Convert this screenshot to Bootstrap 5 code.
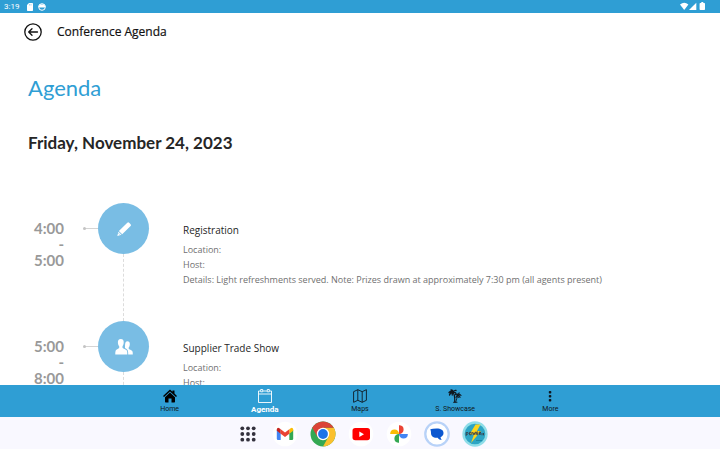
<!DOCTYPE html>
<html lang="en">
<head>
<meta charset="utf-8">
<meta name="viewport" content="width=device-width, initial-scale=1">
<title>Conference Agenda</title>
<link href="https://cdn.jsdelivr.net/npm/bootstrap@5.3.0/dist/css/bootstrap.min.css" rel="stylesheet">
<style>
  :root { --brand: #2f9ed4; --bubble: #79bde4; }
  body { font-family: Lato, sans-serif; color: #262626; background: #fff; }
  svg { display: block; flex: none; }
  .status-bar { background: var(--brand); color: #fff; height: 13px; padding: 0 14px 0 4px; font: 8px/13px Roboto, sans-serif; }
  .app-header { height: 37px; padding: 0 24px; gap: 15px; }
  .app-header h1 { font: 12px/18px "Open Sans", sans-serif; color: #111; -webkit-text-stroke: .2px; }
  .agenda { padding: 24px 28px 0; min-height: 0; }
  .agenda h2 { font-size: 22px; line-height: 28px; color: var(--brand); margin-bottom: 28px; }
  .agenda h3 { font-size: 17px; line-height: 26px; font-weight: 700; margin-bottom: 47px; }
  .session { min-height: 118px; }
  .session-time { width: 36px; padding-top: 17px; font-size: 15px; line-height: 16px; font-weight: 700; color: #999; }
  .connector { width: 15px; height: 5px; margin: 23px 0 0 19px; }
  .rail { width: 51px; }
  .bubble { width: 51px; height: 51px; background: var(--bubble); flex: none; }
  .dots { border-left: 1px dashed #dcdcdc; }
  .session-body { padding: 20px 0 0 34px; font: 9px/15px "Open Sans", sans-serif; color: #707070; }
  .session-body h4 { font-size: 10px; line-height: 15px; font-weight: 400; color: #262626; margin-bottom: 4px; }
  .tab-bar { background: var(--brand); height: 32px; }
  .tabs { max-width: 476px; font: 7px/9px Roboto, sans-serif; }
  .tabs a { color: #101820; padding-top: 4px; gap: 2px; }
  .tabs a.active { color: #fff; font-weight: 700; font-size: 8px; }
  .dock { background: #f9f8ff; height: 32px; padding: 1px 0 0 2px; }
  .dock button { width: 38px; height: 31px; }
  .dock .launcher { padding-left: 2px; }
</style>
<script src="https://cdn.jsdelivr.net/npm/bootstrap@5.3.0/dist/js/bootstrap.bundle.min.js"></script>
</head>
<body class="d-flex flex-column vh-100 overflow-hidden">

<div class="status-bar d-flex align-items-center flex-shrink-0">
  <span>3:19</span>
  <svg class="ms-2" width="6" height="8" viewBox="0 0 6 8"><path d="M2 0h3.3q.7 0 .7.7v6.6q0 .7-.7.7H.7Q0 8 0 7.300V2z" fill="#fff"/><path d="M2.500 1v1.500M4 1v1.500" stroke="#2f9ed4" stroke-width=".4"/></svg>
  <svg class="ms-1" width="10" height="8" viewBox="0 0 10 8"><circle cx="5" cy="4" r="3.300" fill="none" stroke="#fff"/><path d="M1 2.800h8L7.500 4.500h-5z" fill="#fff"/><path d="M2.500 1.500h5v1.500h-5z" fill="#fff"/></svg>
  <svg class="ms-auto" width="26" height="9" viewBox="0 0 26 9"><path d="M0 2.500Q4.200-.8 8.400 2.500L4.200 8z" fill="#fff"/><path d="M16.300.7V8H9z" fill="#fff"/><path d="M21.300 0h2v1h1q.7 0 .7.7v5.600q0 .7-.7.7h-4q-.7 0-.7-.7V1.700q0-.7.7-.7h1z" fill="#fff"/></svg>
</div>

<header class="app-header d-flex align-items-center flex-shrink-0">
  <button type="button" class="btn p-0 border-0" aria-label="Back">
    <svg width="18" height="18" viewBox="0 0 18 18" fill="none" stroke="#111" stroke-width="1.300"><circle cx="9" cy="9" r="8.200"/><path d="M13.500 9H5M8 5.700 4.700 9 8 12.300" stroke-linecap="round" stroke-linejoin="round"/></svg>
  </button>
  <h1 class="m-0">Conference Agenda</h1>
</header>

<main class="agenda flex-grow-1 overflow-hidden">
  <h2 class="fw-normal">Agenda</h2>
  <h3>Friday, November 24, 2023</h3>

  <section class="session d-flex">
    <div class="session-time text-end flex-shrink-0">4:00<br>-<br>5:00</div>
    <svg class="connector" viewBox="0 0 15 5"><path d="M1 2.500h14" stroke="#d4d4d4"/><circle cx="1.500" cy="2.500" r="1.500" fill="#c4c4c4"/></svg>
    <div class="rail d-flex flex-column align-items-center flex-shrink-0">
      <div class="bubble rounded-circle d-flex align-items-center justify-content-center">
        <svg width="16" height="16" viewBox="0 0 16 16" fill="#fff"><path d="M11.300 1.700q.9-.9 1.800 0l1.500 1.500q.9.900 0 1.800L6.200 13.300 2.900 10z"/><path d="M2.400 10.700 5.500 13.800 1.300 15z"/><path d="m2.500 12.300 1.400 1.400" stroke="#79bde4" stroke-width=".7"/></svg>
      </div>
      <div class="dots flex-grow-1"></div>
    </div>
    <div class="session-body">
      <h4>Registration</h4>
      <div>Location:</div>
      <div>Host:</div>
      <div>Details: Light refreshments served. Note: Prizes drawn at approximately 7:30 pm (all agents present)</div>
    </div>
  </section>

  <section class="session d-flex">
    <div class="session-time text-end flex-shrink-0">5:00<br>-<br>8:00</div>
    <svg class="connector" viewBox="0 0 15 5"><path d="M1 2.500h14" stroke="#d4d4d4"/><circle cx="1.500" cy="2.500" r="1.500" fill="#c4c4c4"/></svg>
    <div class="rail d-flex flex-column align-items-center flex-shrink-0">
      <div class="bubble rounded-circle d-flex align-items-center justify-content-center">
        <svg width="18" height="16" viewBox="0 0 18 16" fill="#fff"><path d="M5.800 0C8 0 8.900 1.500 8.700 3.800 8.600 5.600 7.900 6.700 7.500 7.300v1.500c0 .8 4 1.500 4.500 3.200.3 1 .3 2 .3 3.500H.3c0-1.500 0-2.500.3-3.500.5-1.700 3.600-2.400 3.600-3.200V7.300C3.700 6.700 3 5.600 2.900 3.800 2.800 1.500 3.600 0 5.800 0z"/><path d="M12.300 2.300c1.800 0 2.600 1.200 2.500 3.100-.1 1.600-.7 2.500-1.100 3v1.300c0 .7 3.300 1.300 3.800 2.700.3.900.3 1.700.3 3.100h-4.600c0-1.500 0-3-.4-4.100-.5-1.300-1.800-1.900-2.800-2.500V7.500c.3-.8-.4-5.200 2.300-5.200z"/></svg>
      </div>
      <div class="dots flex-grow-1"></div>
    </div>
    <div class="session-body">
      <h4>Supplier Trade Show</h4>
      <div>Location:</div>
      <div>Host:</div>
    </div>
  </section>
</main>

<nav class="tab-bar flex-shrink-0" aria-label="Main">
  <div class="tabs row row-cols-5 g-0 mx-auto">
    <a href="#home" class="d-flex flex-column align-items-center text-decoration-none">
      <svg width="16" height="14" viewBox="0 0 16 14"><path d="M8 .5 1 7l1 1 6-5.500L14 8l1-1-2.500-2.400V1.500h-2v1.300z"/><path d="M8 3.600 3 8.200v4.600q0 .7.700.7h2.800V9.500h3v4h2.800q.7 0 .7-.7V8.200z"/></svg>
      <span>Home</span>
    </a>
    <a href="#agenda" class="active d-flex flex-column align-items-center text-decoration-none" aria-current="page">
      <svg width="14" height="14" viewBox="0 0 14 14" fill="none" stroke="#fff" stroke-width=".9"><path d="M2.500 2H.5v11.500h13V2h-2M5 2h4M.5 5h13"/><path d="M2.700.5h2v2.300h-2zM9.300.5h2v2.300h-2z"/></svg>
      <span>Agenda</span>
    </a>
    <a href="#maps" class="d-flex flex-column align-items-center text-decoration-none">
      <svg width="14" height="14" viewBox="0 0 14 14" fill="none" stroke="#101820" stroke-width=".9" stroke-linejoin="round"><path d="M.6 2.700 4.800.7l4.400 2 4.200-2v10.600l-4.200 2-4.400-2-4.200 2zM4.800.7v10.600M9.200 2.700v10.600"/></svg>
      <span>Maps</span>
    </a>
    <a href="#showcase" class="d-flex flex-column align-items-center text-decoration-none">
      <svg width="14" height="14" viewBox="0 0 14 14" fill="none" stroke="#101820" stroke-linecap="round"><path d="M5 3.500Q3 1.500 1 3.500M5 3.500Q2 3.500 1.500 6M5 3.500Q5.500 1 3 1M5 3.500Q6 1 8 1.500M5 3.500Q8 3 8 5M5 3.500Q4 4.500 4.200 6" stroke-width="1.300"/><path d="M5 3.500Q7 6 6.700 13" stroke-width="1.200"/><path d="M9.800 6Q8 4.500 6.500 6.300M9.800 6Q8 7 8 8.500M9.800 6Q9.500 4 11.500 4M9.800 6Q12 4.800 13 6.500M9.800 6Q12 6.500 12 8.500M9.800 6Q10 7 10.300 8.500" stroke-width="1.100"/><path d="M9.800 6Q9 9 7.700 13M5.500 13.300h3.500" stroke-width=".9"/></svg>
      <span>S. Showcase</span>
    </a>
    <a href="#more" class="d-flex flex-column align-items-center text-decoration-none">
      <svg width="14" height="14" viewBox="0 0 14 14" fill="#101820"><rect x="5.800" y="2" width="2.500" height="2.500" rx=".8"/><rect x="5.800" y="6" width="2.500" height="2.500" rx=".8"/><rect x="5.800" y="10" width="2.500" height="2.500" rx=".8"/></svg>
      <span>More</span>
    </a>
  </div>
</nav>

<footer class="dock d-flex justify-content-center align-items-center flex-shrink-0">
  <button type="button" class="launcher btn py-0 pe-0 border-0 d-flex align-items-center justify-content-center" aria-label="All apps">
    <svg width="16" height="16" viewBox="0 0 16 16" fill="#33313d"><circle cx="2.300" cy="2.300" r="1.900"/><circle cx="8" cy="2.300" r="1.900"/><circle cx="13.700" cy="2.300" r="1.900"/><circle cx="2.300" cy="8" r="1.900"/><circle cx="8" cy="8" r="1.900"/><circle cx="13.700" cy="8" r="1.900"/><circle cx="2.300" cy="13.700" r="1.900"/><circle cx="8" cy="13.700" r="1.900"/><circle cx="13.700" cy="13.700" r="1.900"/></svg>
  </button>
  <button type="button" class="btn p-0 border-0 d-flex align-items-center justify-content-center" aria-label="Gmail">
    <svg width="26" height="26" viewBox="0 0 26 26"><circle cx="13" cy="13" r="12.300" fill="#fff"/><path d="M4.800 9v8.800q0 1.300 1.200 1.300h2.700v-7z" fill="#4285f4"/><path d="M21.200 9v8.800q0 1.300-1.200 1.300h-2.700v-7z" fill="#34a853"/><path d="M17.300 8.300v4.500l3.900-3V8.400q-.3-2.300-2.600-1.200z" fill="#fbbc04"/><path d="M4.800 9.800V8.400q.3-2.300 2.600-1.200l1.300 1.100v4.500z" fill="#c5221f"/><path d="M8.700 8.300 13 11.500l4.300-3.200v4.500L13 16l-4.300-3.200z" fill="#ea4335"/></svg>
  </button>
  <button type="button" class="btn p-0 border-0 d-flex align-items-center justify-content-center" aria-label="Chrome">
    <svg width="26" height="26" viewBox="0 0 26 26"><circle cx="13" cy="13" r="12.500" fill="#34a853"/><path d="M13 6.800h10.900A12.500 12.500 0 0 1 13 25.500L18.400 16z" fill="#fbc02d"/><path d="M2.200 6.700 7.600 16 13 13V6.800h10.800A12.500 12.500 0 0 0 2.200 6.700z" fill="#db4437"/><circle cx="13" cy="13" r="6.200" fill="#fff"/><circle cx="13" cy="13" r="4.900" fill="#1a73e8"/></svg>
  </button>
  <button type="button" class="btn p-0 border-0 d-flex align-items-center justify-content-center" aria-label="YouTube">
    <svg width="26" height="26" viewBox="0 0 26 26"><circle cx="13" cy="13" r="12.300" fill="#fff"/><rect x="4.500" y="7" width="17.500" height="12.300" rx="2.800" fill="#f00"/><path d="m11.300 10.500 4.700 2.700-4.700 2.700z" fill="#fff"/></svg>
  </button>
  <button type="button" class="btn p-0 border-0 d-flex align-items-center justify-content-center" aria-label="Photos">
    <svg width="26" height="26" viewBox="0 0 26 26"><circle cx="13" cy="13" r="12.300" fill="#fff"/><path d="M13 4.200h.8a4.200 4.200 0 0 1 3.800 4.200 4.400 4.400 0 0 1-4.600 4.600z" fill="#ea4335"/><path d="M21.800 13v.8a4.200 4.200 0 0 1-4.200 3.800A4.400 4.400 0 0 1 13 13z" fill="#4285f4"/><path d="M13 21.800h-.8a4.200 4.200 0 0 1-3.800-4.200A4.400 4.400 0 0 1 13 13z" fill="#34a853"/><path d="M4.200 13v-.8a4.200 4.200 0 0 1 4.200-3.800A4.400 4.400 0 0 1 13 13z" fill="#fbbc04"/></svg>
  </button>
  <button type="button" class="btn p-0 border-0 d-flex align-items-center justify-content-center" aria-label="Messages">
    <svg width="26" height="26" viewBox="0 0 26 26"><circle cx="13" cy="13" r="11.700" fill="#fff" stroke="#b8d2f8" stroke-width="2.300"/><path d="M6.300 8.300Q8.500 7.500 12.500 7.500c4.500 0 7 1.600 7 4.600 0 2-1.200 3.400-3 4.100.2 1.300.7 2 1.400 2.800-1.900 0-3.300-.7-4.200-2.200h-1.200c-3.500 0-5.500-1.800-5.500-4.800 0-1.600-.3-2.700-.7-3.700z" fill="#0b57d0"/></svg>
  </button>
  <button type="button" class="btn p-0 border-0 d-flex align-items-center justify-content-center" aria-label="Power">
    <svg width="26" height="26" viewBox="0 0 26 26"><circle cx="13" cy="13" r="11.500" fill="#2da5c4" stroke="#8fdde8" stroke-width="2.300"/><path d="M13.500 3.500h5l-3.500 6.500h4L9 22l3-8.500H7.500z" fill="#fcd41c"/><path d="M4.200 14.800v-3.300h1.600q.8 1-.2 1.800H4.200M7.500 11.300h1.700v2.500H7.500zM10.500 11l.8 2.700.8-2 .7 2 .9-3M16 11h-1.300v2.700H16M14.700 12.300H16M17.200 14v-3h1.300v1.400h-1.300l1.400 1.500M20 12v2.300M21.500 12v2.300" fill="none" stroke="#373d49" stroke-width=".9"/><path d="M14 19.500h6" stroke="#1c7f9b" stroke-width=".8"/></svg>
  </button>
</footer>
</body>
</html>
